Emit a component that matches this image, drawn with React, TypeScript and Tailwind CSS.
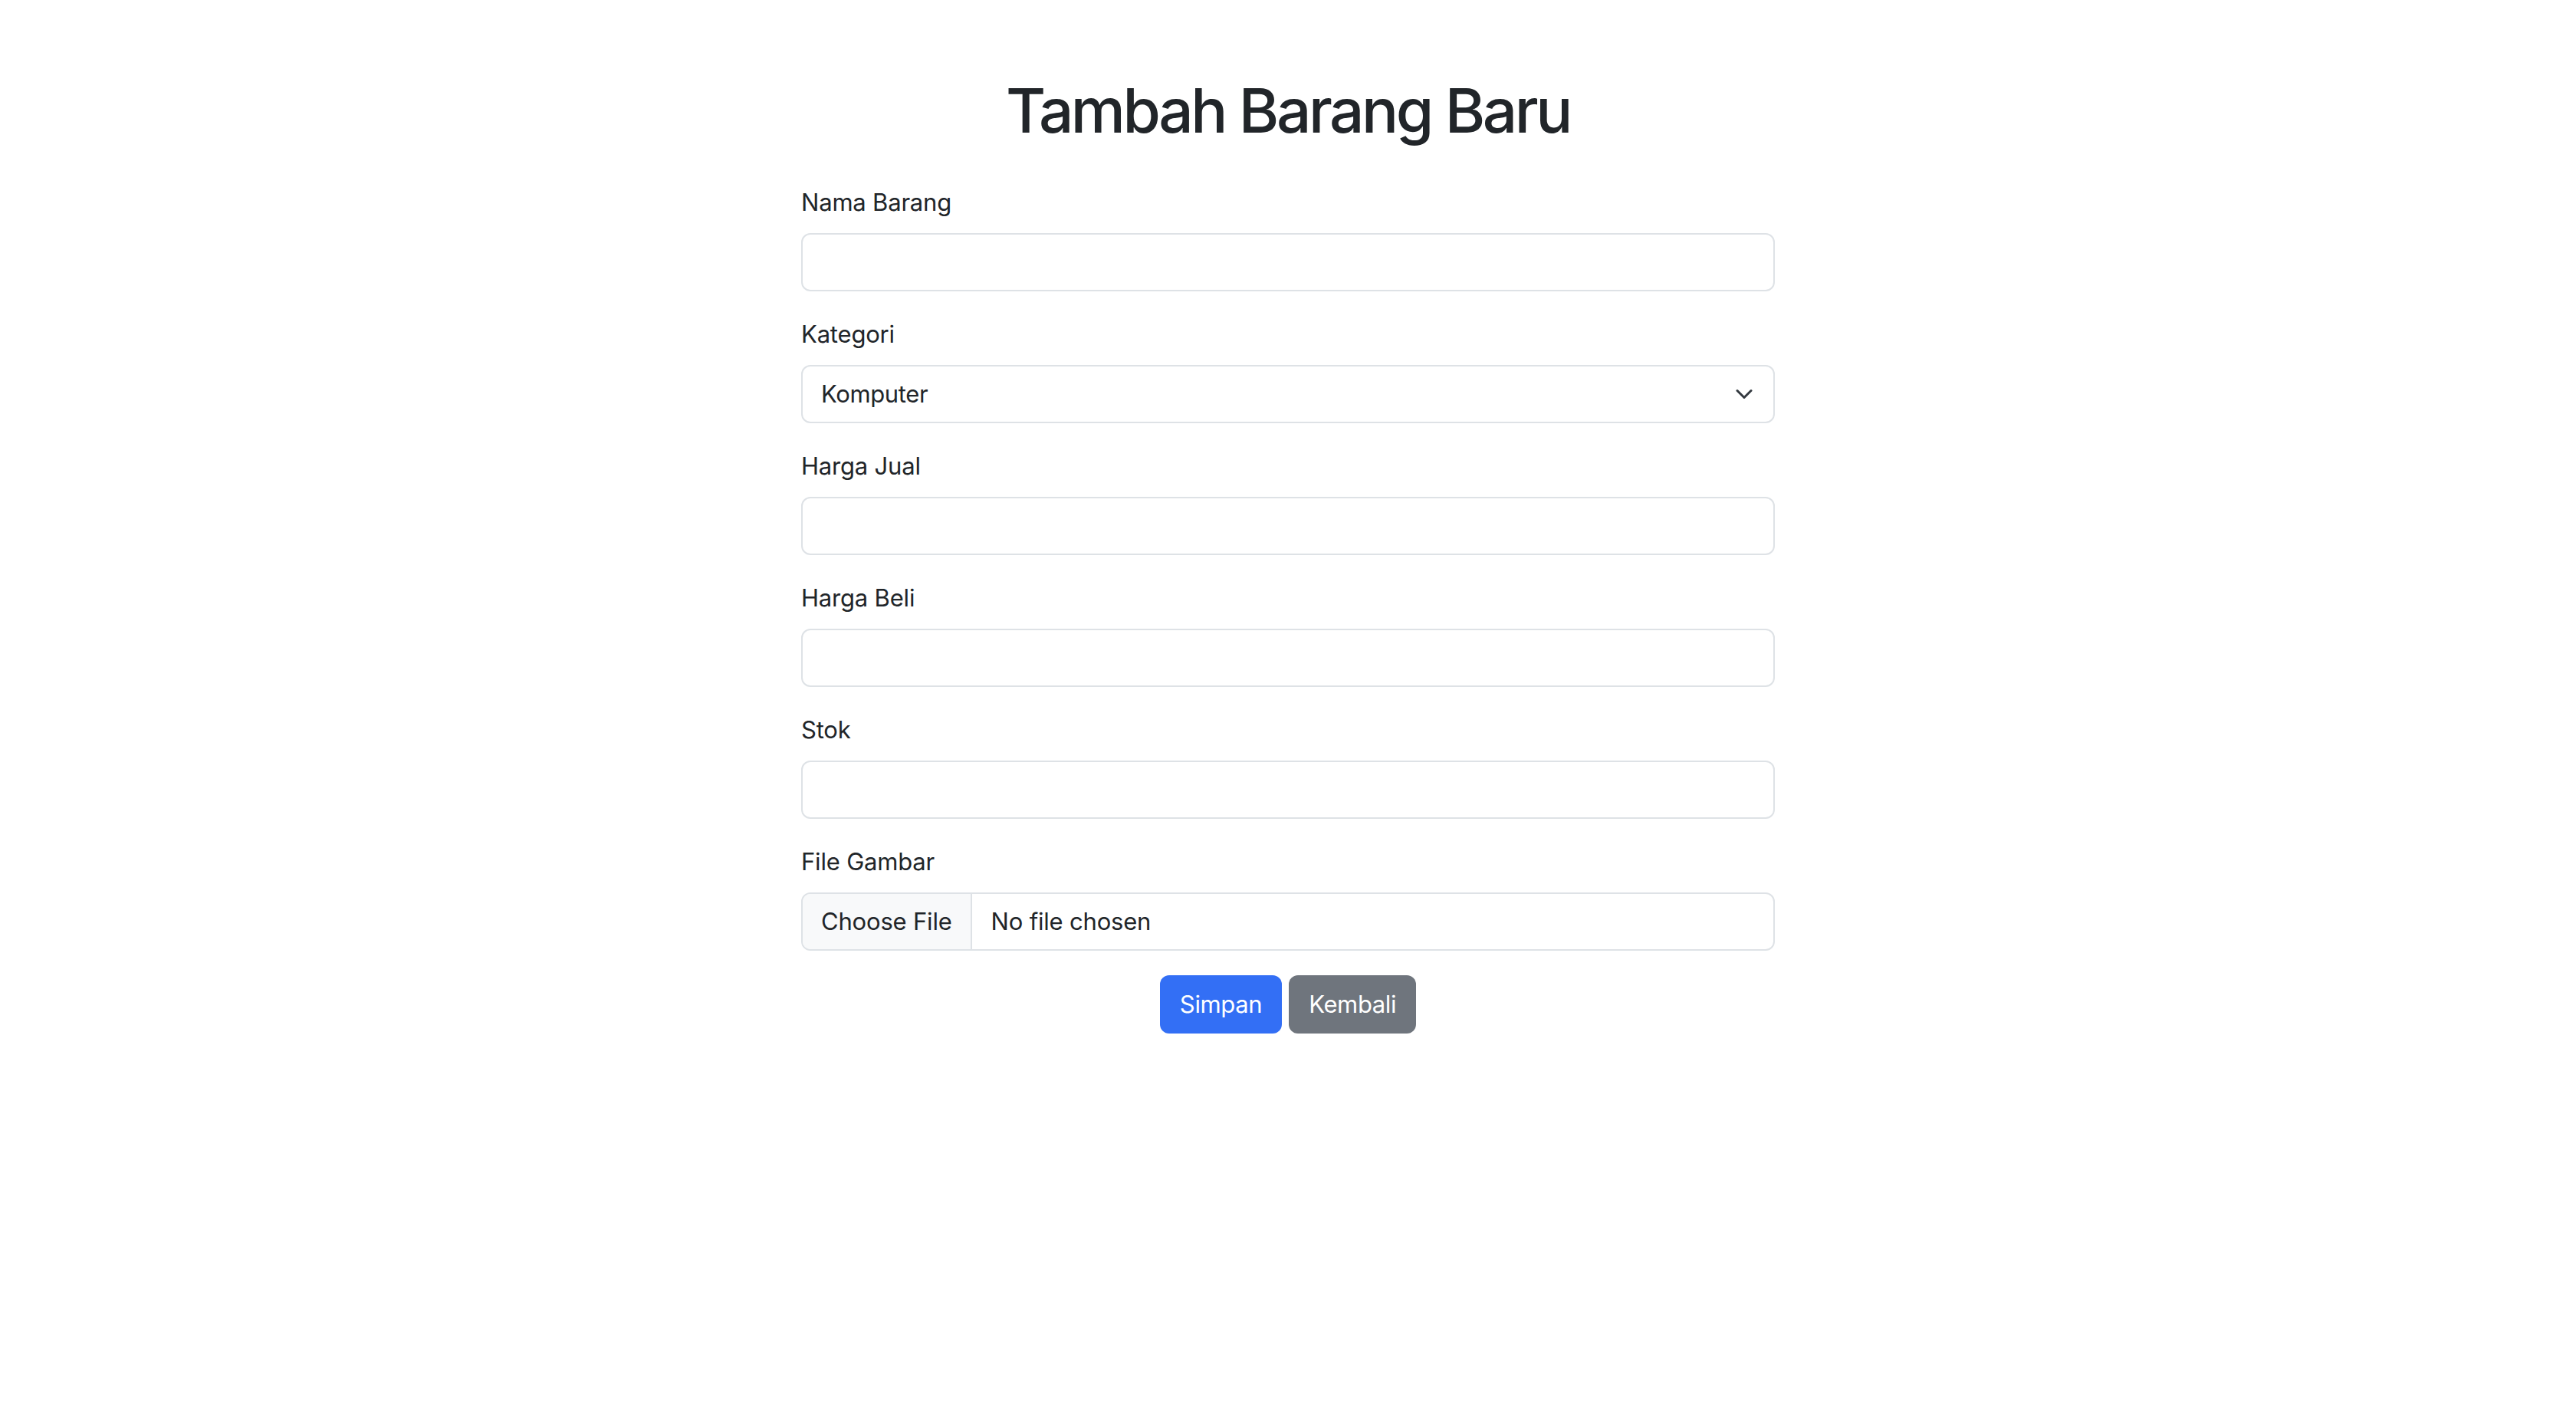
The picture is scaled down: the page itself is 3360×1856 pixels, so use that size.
import { useState } from 'react'

const FIELDS_TOP = ['Nama Barang']
const FIELDS_BOTTOM = ['Harga Jual', 'Harga Beli', 'Stok']

function Field({ label }: { label: string }) {
  return (
    <div className="mb-[32px]">
      <label className="block text-[31px] leading-[48px] mb-[16px]">{label}</label>
      <input
        type="text"
        className="block w-full h-[76px] px-[24px] text-[31px] bg-white border-2 border-[#dee2e6] rounded-[12px] outline-none"
      />
    </div>
  )
}

export default function App() {
  const [kategori, setKategori] = useState('Komputer')

  return (
    <div className="min-h-screen w-full bg-white text-[#212529] tracking-[-0.012em] font-['Inter','Noto_Sans',sans-serif]">
      <div className="mx-auto w-[1270px] pt-[96px]">
        <h1 className="text-center text-[80px] leading-[96px] font-medium tracking-[-0.043em] mb-[48px]">Tambah Barang Baru</h1>

        <form onSubmit={e => e.preventDefault()}>
          {FIELDS_TOP.map(f => (
            <Field key={f} label={f} />
          ))}

          {/* Kategori select */}
          <div className="mb-[32px]">
            <label className="block text-[31px] leading-[48px] mb-[16px]">Kategori</label>
            <div className="relative">
              <select
                value={kategori}
                onChange={e => setKategori(e.target.value)}
                className="block w-full h-[76px] pl-[24px] pr-[72px] text-[31px] tracking-[-0.012em] bg-white border-2 border-[#dee2e6] rounded-[12px] appearance-none outline-none text-[#212529]"
              >
                <option>Komputer</option>
                <option>Elektronik</option>
                <option>Aksesoris</option>
              </select>
              <svg
                className="absolute right-[28px] top-1/2 -translate-y-1/2 w-[24px] h-[24px] pointer-events-none"
                viewBox="0 0 16 16"
                fill="none"
                stroke="#343a40"
                strokeWidth="2"
                strokeLinecap="round"
                strokeLinejoin="round"
              >
                <path d="M2 5l6 6 6-6" />
              </svg>
            </div>
          </div>

          {FIELDS_BOTTOM.map(f => (
            <Field key={f} label={f} />
          ))}

          {/* File input */}
          <div className="mb-[32px]">
            <label className="block text-[31px] leading-[48px] mb-[16px]">File Gambar</label>
            <div className="flex items-center w-full h-[76px] border-2 border-[#dee2e6] rounded-[12px] overflow-hidden text-[31px]">
              <div className="h-full flex items-center px-[24px] bg-[#f8f9fa] border-r-2 border-[#dee2e6]">Choose File</div>
              <span className="ml-[25px]">No file chosen</span>
            </div>
          </div>

          <div className="flex justify-center gap-[9px]">
            <button
              type="submit"
              className="h-[76px] px-[26px] text-[31px] tracking-[-0.012em] text-white bg-[#336ff5] rounded-[12px]"
            >
              Simpan
            </button>
            <button
              type="button"
              className="h-[76px] px-[26px] text-[31px] tracking-[-0.012em] text-white bg-[#6f757d] rounded-[12px]"
            >
              Kembali
            </button>
          </div>
        </form>
      </div>
    </div>
  )
}
